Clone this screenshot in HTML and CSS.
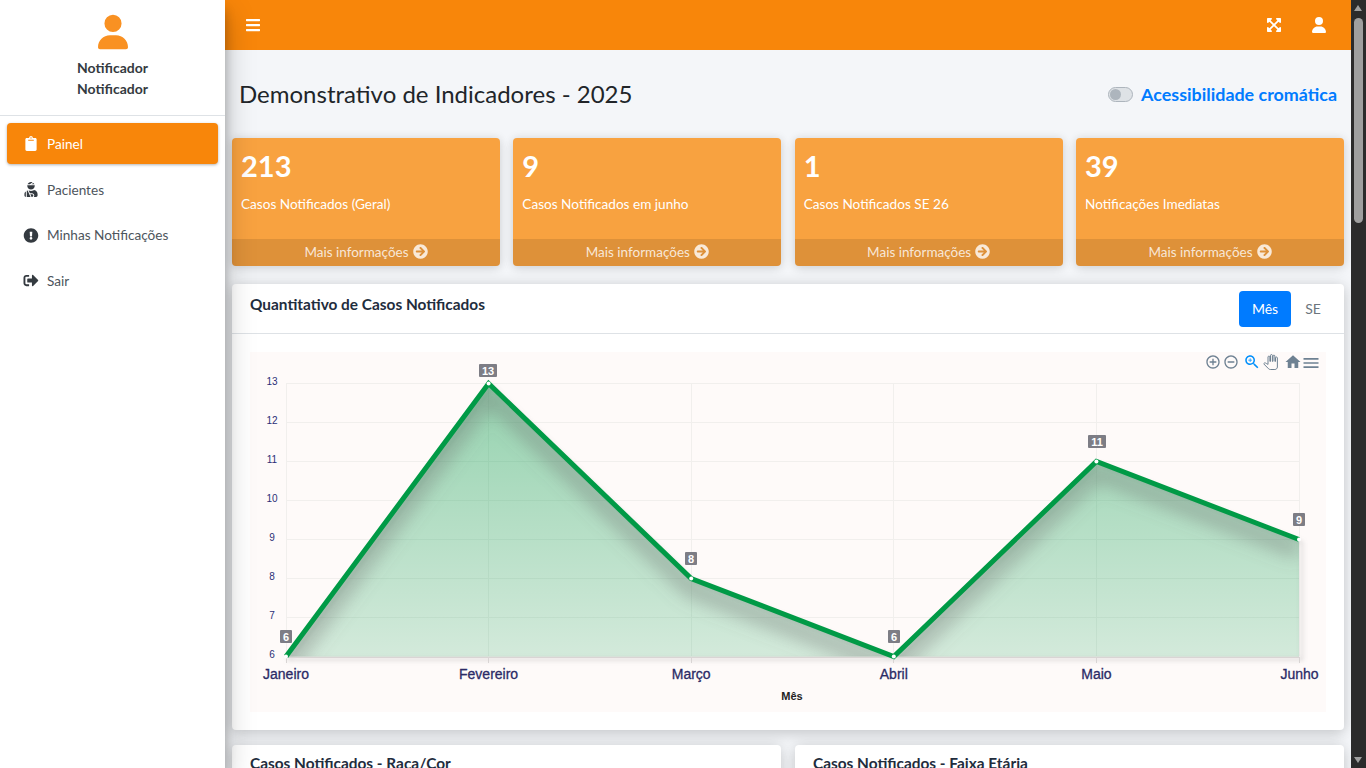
FILE: index.html
```html
<!DOCTYPE html>
<html lang="pt-BR">
<head>
  <meta charset="UTF-8">
  <title>Demonstrativo de Indicadores</title>
  <link rel="stylesheet" href="styles.css">
</head>
<body>

<svg class="defs" width="0" height="0">
  <symbol id="i-user" viewBox="0 0 448 512"><path d="M224 256A128 128 0 1 0 224 0a128 128 0 1 0 0 256zm-45.7 48C79.8 304 0 383.8 0 482.3C0 498.7 13.3 512 29.7 512H418.3c16.4 0 29.7-13.3 29.7-29.7C448 383.8 368.2 304 269.7 304H178.3z"/></symbol>
  <symbol id="i-arrow" viewBox="0 0 512 512"><path d="M256 8c137 0 248 111 248 248S393 504 256 504 8 393 8 256 119 8 256 8zm-28.9 143.6l75.5 72.4H120c-13.3 0-24 10.7-24 24v16c0 13.3 10.7 24 24 24h182.6l-75.5 72.4c-9.7 9.3-9.9 24.8-.4 34.3l11 10.9c9.4 9.4 24.6 9.4 33.9 0L404.3 273c9.4-9.4 9.4-24.6 0-33.9L271.6 106.3c-9.4-9.4-24.6-9.4-33.9 0l-11 10.9c-9.5 9.6-9.3 25.1.4 34.4z"/></symbol>
</svg>

<div class="app">

  <!-- SIDEBAR -->
  <aside class="sidebar">
    <div class="profile">
      <svg class="profile-icon"><use href="#i-user"/></svg>
      <div class="profile-name">Notificador</div>
      <div class="profile-name">Notificador</div>
    </div>
    <nav class="menu">
      <a class="menu-item active" href="#">
        <svg class="menu-icon" viewBox="0 0 384 512"><path d="M384 112v352c0 26.51-21.49 48-48 48H48c-26.51 0-48-21.49-48-48V112c0-26.51 21.49-48 48-48h80c0-35.29 28.71-64 64-64s64 28.71 64 64h80c26.51 0 48 21.49 48 48zM192 40c-13.255 0-24 10.745-24 24s10.745 24 24 24 24-10.745 24-24-10.745-24-24-24m96 114v-20a6 6 0 0 0-6-6H102a6 6 0 0 0-6 6v20a6 6 0 0 0 6 6h180a6 6 0 0 0 6-6z"/></svg>
        Painel
      </a>
      <a class="menu-item" href="#">
        <svg class="menu-icon" viewBox="0 0 448 512"><path d="M277.37 11.98C261.08 4.47 243.11 0 224 0c-53.69 0-99.5 33.13-118.51 80h81.19l90.69-68.02zM342.51 80c-7.9-19.47-20.67-36.2-36.49-49.52L239.99 80h102.52zM224 256c70.69 0 128-57.31 128-128 0-5.48-.95-10.7-1.61-16H97.61c-.67 5.3-1.61 10.52-1.61 16 0 70.69 57.31 128 128 128zM80 299.7V512h128.26l-98.45-221.52A132.835 132.835 0 0 0 80 299.7zM0 464c0 26.51 21.49 48 48 48V320.24C19.1 338.52 0 370.83 0 406.45V464zm256-48h-55.38l42.67 96H256c26.47 0 48-21.53 48-48s-21.53-48-48-48zm57.6-128h-16.71c-22.24 10.18-46.88 16-72.89 16s-50.65-5.82-72.89-16h-7.37l42.67 96H256c44.11 0 80 35.89 80 80 0 18.08-6.26 34.59-16.41 48H400c26.51 0 48-21.49 48-48v-57.6c0-74.23-60.17-134.4-134.4-134.4z"/></svg>
        Pacientes
      </a>
      <a class="menu-item" href="#">
        <svg class="menu-icon" viewBox="0 0 512 512"><path d="M504 256c0 136.997-111.043 248-248 248S8 392.997 8 256C8 119.083 119.043 8 256 8s248 111.083 248 248zm-248 50c-25.405 0-46 20.595-46 46s20.595 46 46 46 46-20.595 46-46-20.595-46-46-46zm-43.673-165.346l7.418 136c.347 6.364 5.609 11.346 11.982 11.346h48.546c6.373 0 11.635-4.982 11.982-11.346l7.418-136c.375-6.874-5.098-12.654-11.982-12.654h-63.383c-6.884 0-12.356 5.78-11.981 12.654z"/></svg>
        Minhas Notificações
      </a>
      <a class="menu-item" href="#">
        <svg class="menu-icon" viewBox="0 0 512 512"><path d="M497 273L329 441c-15 15-41 4.5-41-17v-96H152c-13.3 0-24-10.7-24-24v-96c0-13.3 10.7-24 24-24h136V88c0-21.4 25.9-32 41-17l168 168c9.3 9.4 9.3 24.6 0 34zM192 436v-40c0-6.6-5.4-12-12-12H96c-17.7 0-32-14.3-32-32V160c0-17.7 14.3-32 32-32h84c6.6 0 12-5.4 12-12V76c0-6.6-5.4-12-12-12H96c-53 0-96 43-96 96v192c0 53 43 96 96 96h84c6.6 0 12-5.4 12-12z"/></svg>
        Sair
      </a>
    </nav>
  </aside>

  <div class="main">

    <!-- TOP BAR -->
    <header class="topbar">
      <svg class="top-icon" viewBox="0 0 448 512"><path d="M16 132h416c8.837 0 16-7.163 16-16V76c0-8.837-7.163-16-16-16H16C7.163 60 0 67.163 0 76v40c0 8.837 7.163 16 16 16zm0 160h416c8.837 0 16-7.163 16-16v-40c0-8.837-7.163-16-16-16H16c-8.837 0-16 7.163-16 16v40c0 8.837 7.163 16 16 16zm0 160h416c8.837 0 16-7.163 16-16v-40c0-8.837-7.163-16-16-16H16c-8.837 0-16 7.163-16 16v40c0 8.837 7.163 16 16 16z"/></svg>
      <div class="top-right">
        <svg class="top-icon" viewBox="0 0 448 512"><path d="M448 344v112a23.94 23.94 0 0 1-24 24H312c-21.39 0-32.09-25.9-17-41l36.2-36.2L224 295.6 116.77 402.9 153 439c15.09 15.1 4.39 41-17 41H24a23.94 23.94 0 0 1-24-24V344c0-21.4 25.89-32.1 41-17l36.19 36.2L184.46 256 77.18 148.7 41 185c-15.1 15.1-41 4.4-41-17V56a23.94 23.94 0 0 1 24-24h112c21.39 0 32.09 25.9 17 41l-36.2 36.2L224 216.4l107.23-107.3L295 73c-15.09-15.1-4.39-41 17-41h112a23.94 23.94 0 0 1 24 24v112c0 21.4-25.89 32.1-41 17l-36.19-36.2L263.54 256l107.28 107.3L407 327.1c15.1-15.2 41-4.5 41 16.9z"/></svg>
        <svg class="top-icon"><use href="#i-user"/></svg>
      </div>
    </header>

    <div class="content">

      <div class="page-head">
        <h1>Demonstrativo de Indicadores - 2025</h1>
        <label class="access">
          <span class="switch"><span class="knob"></span></span>
          Acessibilidade cromática
        </label>
      </div>

      <!-- SMALL BOXES -->
      <div class="boxes">
        <div class="box">
          <div class="box-body"><strong>213</strong><p>Casos Notificados (Geral)</p></div>
          <a class="box-foot" href="#">Mais informações <svg class="foot-icon"><use href="#i-arrow"/></svg></a>
        </div>
        <div class="box">
          <div class="box-body"><strong>9</strong><p>Casos Notificados em junho</p></div>
          <a class="box-foot" href="#">Mais informações <svg class="foot-icon"><use href="#i-arrow"/></svg></a>
        </div>
        <div class="box">
          <div class="box-body"><strong>1</strong><p>Casos Notificados SE 26</p></div>
          <a class="box-foot" href="#">Mais informações <svg class="foot-icon"><use href="#i-arrow"/></svg></a>
        </div>
        <div class="box">
          <div class="box-body"><strong>39</strong><p>Notificações Imediatas</p></div>
          <a class="box-foot" href="#">Mais informações <svg class="foot-icon"><use href="#i-arrow"/></svg></a>
        </div>
      </div>

      <!-- LINE CHART -->
      <section class="card">
        <div class="card-head">
          <h2>Quantitativo de Casos Notificados</h2>
          <div class="tabs">
            <a class="tab active" href="#">Mês</a>
            <a class="tab" href="#">SE</a>
          </div>
        </div>
        <div class="card-body">
          <svg class="chart" width="1076" height="360" viewBox="0 0 1076 360">
            <defs>
              <linearGradient id="areaFill" x1="0" y1="31" x2="0" y2="304" gradientUnits="userSpaceOnUse">
                <stop offset="0" stop-color="#009a46" stop-opacity=".42"/>
                <stop offset="1" stop-color="#009a46" stop-opacity=".17"/>
              </linearGradient>
              <filter id="soft" x="-5%" y="-20%" width="110%" height="140%"><feGaussianBlur stdDeviation="9"/></filter>
              <filter id="faint" x="-5%" y="-20%" width="110%" height="140%"><feGaussianBlur stdDeviation="2"/></filter>
              <clipPath id="areaClip"><path d="M36 304.5L238.6 31.5L441.2 226.5L643.8 304.5L846.4 109.5L1049 187.5V304.5Z"/></clipPath>
            </defs>

            <g class="grid-lines">
              <path d="M36 31.5H1049M36 70.5H1049M36 109.5H1049M36 148.5H1049M36 187.5H1049M36 226.5H1049M36 265.5H1049M36 304.5H1049"/>
              <path d="M36.5 31V304M238.5 31V304M441.5 31V304M643.5 31V304M846.5 31V304M1049.5 31V304"/>
            </g>

            <path class="edge-shadow" filter="url(#faint)" d="M39 307.5L241.6 34.5L444.2 229.5L646.8 307.5L849.4 112.5L1052 190.5V307.5Z"/>
            <path fill="url(#areaFill)" d="M36 304.5L238.6 31.5L441.2 226.5L643.8 304.5L846.4 109.5L1049 187.5V304.5Z"/>
            <g clip-path="url(#areaClip)">
              <path class="area-shadow" filter="url(#soft)" d="M36 315L238.6 42L441.2 237L643.8 315L846.4 120L1049 198"/>
            </g>
            <path class="axis" d="M36 305.5H1049M36.5 305V311M238.5 305V311M441.5 305V311M643.5 305V311M846.5 305V311M1049.5 305V311"/>
            <path class="line" d="M36 304.5L238.6 31.5L441.2 226.5L643.8 304.5L846.4 109.5L1049 187.5"/>

            <g class="dots">
              <circle cx="36" cy="304.5" r="2"/><circle cx="238.6" cy="31.5" r="2"/><circle cx="441.2" cy="226.5" r="2"/>
              <circle cx="643.8" cy="304.5" r="2"/><circle cx="846.4" cy="109.5" r="2"/><circle cx="1049" cy="187.5" r="2"/>
            </g>

            <g class="tag">
              <rect x="30" y="278" width="12" height="13" rx="1"/><text x="36" y="288.5">6</text>
              <rect x="229" y="12" width="18" height="13" rx="1"/><text x="238" y="22.5">13</text>
              <rect x="435" y="200" width="12" height="13" rx="1"/><text x="441" y="210.5">8</text>
              <rect x="638" y="278" width="12" height="13" rx="1"/><text x="644" y="288.5">6</text>
              <rect x="838" y="83" width="18" height="13" rx="1"/><text x="847" y="93.5">11</text>
              <rect x="1043" y="161" width="12" height="13" rx="1"/><text x="1049" y="171.5">9</text>
            </g>

            <g class="y-label">
              <text x="22" y="33">13</text><text x="22" y="72">12</text><text x="22" y="111">11</text><text x="22" y="150">10</text>
              <text x="22" y="189">9</text><text x="22" y="228">8</text><text x="22" y="267">7</text><text x="22" y="306">6</text>
            </g>

            <g class="x-label">
              <text x="36" y="327">Janeiro</text><text x="238.6" y="327">Fevereiro</text><text x="441.2" y="327">Março</text>
              <text x="643.8" y="327">Abril</text><text x="846.4" y="327">Maio</text><text x="1049.5" y="327">Junho</text>
            </g>
            <text class="x-title" x="542" y="348">Mês</text>

            <!-- toolbar -->
            <g class="tool">
              <svg x="955" y="2" width="16" height="16" viewBox="0 0 24 24"><path d="M13 7h-2v4H7v2h4v4h2v-4h4v-2h-4V7zm-1-5C6.48 2 2 6.48 2 12s4.48 10 10 10 10-4.48 10-10S17.52 2 12 2zm0 18c-4.41 0-8-3.59-8-8s3.59-8 8-8 8 3.59 8 8-3.59 8-8 8z"/></svg>
              <svg x="973" y="2" width="16" height="16" viewBox="0 0 24 24"><path d="M7 11v2h10v-2H7zm5-9C6.48 2 2 6.48 2 12s4.48 10 10 10 10-4.48 10-10S17.52 2 12 2zm0 18c-4.41 0-8-3.59-8-8s3.59-8 8-8 8 3.59 8 8-3.59 8-8 8z"/></svg>
              <svg class="tool-on" x="993" y="1" width="18" height="18" viewBox="0 0 24 24"><path d="M15.5 14h-.79l-.28-.27C15.41 12.59 16 11.11 16 9.5 16 5.91 13.09 3 9.5 3S3 5.91 3 9.5 5.91 16 9.5 16c1.61 0 3.09-.59 4.23-1.57l.27.28v.79l5 4.99L20.49 19l-4.99-5zm-6 0C7.01 14 5 11.99 5 9.5S7.01 5 9.5 5 14 7.01 14 9.5 11.99 14 9.5 14z"/><path d="M12 10h-2v2H9v-2H7V9h2V7h1v2h2v1z"/></svg>
              <svg class="tool-pan" x="1013" y="2" width="15" height="16" viewBox="0 0 24 24"><path d="M23 5.5V20c0 2.2-1.8 4-4 4h-7.3c-1.08 0-2.1-.43-2.85-1.19L1 14.83s1.26-1.23 1.3-1.25c.22-.19.49-.29.79-.29.22 0 .42.06.6.16.04.01 4.31 2.46 4.31 2.46V4c0-.83.67-1.5 1.5-1.5S11 3.17 11 4v7h1V1.5c0-.83.67-1.5 1.5-1.5S15 .67 15 1.5V11h1V2.5c0-.83.67-1.5 1.5-1.5s1.5.67 1.5 1.5V11h1V5.5c0-.83.67-1.5 1.5-1.5s1.5.67 1.5 1.5z"/></svg>
              <svg x="1034" y="1" width="18" height="18" viewBox="0 0 24 24"><path d="M10 20v-6h4v6h5v-8h3L12 3 2 12h3v8z"/></svg>
              <svg x="1051" y="1" width="20" height="20" viewBox="0 0 24 24"><path d="M3 18h18v-2H3v2zm0-5h18v-2H3v2zm0-7v2h18V6H3z"/></svg>
            </g>
          </svg>
        </div>
      </section>

      <!-- LOWER CARDS -->
      <div class="lower">
        <section class="card"><div class="lower-head"><h2>Casos Notificados - Raça/Cor</h2></div></section>
        <section class="card"><div class="lower-head"><h2>Casos Notificados - Faixa Etária</h2></div></section>
      </div>

    </div>
  </div>

  <!-- SCROLLBAR -->
  <div class="scrollbar">
    <span class="arrow-up"></span>
    <span class="thumb"></span>
    <span class="arrow-down"></span>
  </div>

</div>
</body>
</html>
```

FILE: styles.css
```css
* {
  box-sizing: border-box;
}

html, body {
  margin: 0;
  height: 768px;
  overflow: hidden;
}

body {
  font-family: "Lato", "Noto Sans", sans-serif;
  font-size: 14px;
  color: #212529;
  background: #f4f6f9;
}

a {
  text-decoration: none;
}

.defs {
  position: absolute;
}

.app {
  display: flex;
  height: 768px;
}

/* Sidebar */
.sidebar {
  flex: 0 0 225px;
  background: #fff;
  box-shadow: 0 14px 28px rgba(0, 0, 0, .25), 0 10px 10px rgba(0, 0, 0, .22);
  position: relative;
  z-index: 2;
}

.profile {
  height: 116px;
  padding-top: 14px;
  border-bottom: 1px solid #dee2e6;
  text-align: center;
}

.profile-icon {
  display: block;
  width: 30px;
  height: 36px;
  margin: 0 auto 7px;
  fill: #f99122;
}

.profile-name {
  font-size: 14px;
  font-weight: 700;
  line-height: 21px;
  color: #343a40;
}

.menu {
  display: flex;
  flex-direction: column;
  padding: 7px 7px 0;
}

.menu-item {
  display: flex;
  align-items: center;
  gap: 8px;
  height: 41px;
  margin-bottom: 4.5px;
  padding-left: 16px;
  border-radius: 4px;
  font-size: 13.6px;
  color: #4d555c;
  fill: #343a40;
}

.menu-item.active {
  margin-bottom: 5.4px;
  background: #f8860a;
  color: #fff;
  fill: #fff;
  box-shadow: 0 1px 3px rgba(0, 0, 0, .3);
}

.menu-icon {
  width: 16px;
  height: 15px;
}

/* Top bar */
.main {
  flex: 1;
  min-width: 0;
  overflow: hidden;
}

.topbar {
  display: flex;
  justify-content: space-between;
  align-items: center;
  height: 50px;
  padding: 0 25px 0 21px;
  background: #f8860a;
}

.top-right {
  display: flex;
  gap: 31px;
}

.top-icon {
  width: 14px;
  height: 16px;
  fill: #fff;
}

/* Content */
.content {
  padding: 0 7px;
}

.page-head {
  display: flex;
  justify-content: space-between;
  align-items: center;
  height: 88px;
  padding: 0 7px;
}

.page-head h1 {
  margin: 0 0 2px;
  font-size: 24px;
  font-weight: 400;
  color: #212529;
}

.access {
  display: flex;
  align-items: center;
  gap: 8px;
  font-size: 17.9px;
  font-weight: 700;
  color: #007bff;
}

.switch {
  width: 25px;
  height: 15px;
  padding: 1px;
  border: 1px solid #adb5bd;
  border-radius: 8px;
  background: #dee2e6;
}

.knob {
  display: block;
  width: 11px;
  height: 11px;
  border-radius: 50%;
  background: #adb5bd;
}

.boxes {
  display: grid;
  grid-template-columns: repeat(4, 1fr);
  gap: 13.33px;
}

.box {
  height: 128px;
  display: flex;
  flex-direction: column;
  border-radius: 4px;
  background: #f8a240;
  color: #fff;
  box-shadow: 0 0 10px rgba(0, 0, 0, .1), 0 4px 12px rgba(0, 0, 0, .08);
}

.box-body {
  flex: 1;
  padding: 9px 9px;
}

.box-body strong {
  display: block;
  font-size: 29px;
  line-height: 37px;
}

.box-body p {
  margin: 10px 0 0;
  font-size: 13.6px;
  line-height: 20px;
}

.box-foot {
  display: flex;
  justify-content: center;
  align-items: center;
  gap: 4px;
  height: 27px;
  padding-bottom: 2px;
  border-radius: 0 0 4px 4px;
  background: rgba(0, 0, 0, .1);
  font-size: 13.5px;
  color: rgba(255, 255, 255, .8);
  fill: rgba(255, 255, 255, .8);
}

.foot-icon {
  width: 15px;
  height: 15px;
}

/* Cards */
.card {
  border-radius: 4px;
  background: #fff;
  box-shadow: 0 0 14px rgba(0, 0, 0, .12), 0 6px 14px rgba(0, 0, 0, .1);
}

.boxes + .card {
  margin-top: 18px;
  height: 446px;
}

.card h2 {
  margin: 0;
  font-size: 15.4px;
  font-weight: 700;
  color: #1f2d3d;
}

.card-head {
  display: flex;
  justify-content: space-between;
  height: 50px;
  padding: 7px 9px 0 18px;
  border-bottom: 1px solid #dee2e6;
}

.card-head h2 {
  padding-top: 4px;
}

.tabs {
  display: flex;
}

.tab {
  display: flex;
  justify-content: center;
  align-items: center;
  width: 44px;
  height: 36px;
  padding-bottom: 1px;
  border-radius: 4px;
  font-size: 14px;
  color: #6c757d;
}

.tab.active {
  width: 52px;
  background: #007bff;
  color: #fff;
}

.card-body {
  padding: 18px 18px 0;
}

.chart {
  display: block;
  background: #fefaf9;
}

.grid-lines path {
  fill: none;
  stroke: #f1efed;
}

.edge-shadow {
  fill: none;
  stroke: #888;
  stroke-width: 3;
  stroke-opacity: .25;
}

.area-shadow {
  fill: none;
  stroke: #6b6b6b;
  stroke-width: 16;
  stroke-opacity: .42;
}

.axis {
  fill: none;
  stroke: #d9d5d4;
}

.line {
  fill: none;
  stroke: #009a46;
  stroke-width: 5;
}

.dots circle {
  fill: #fff;
}

.tag rect {
  fill: #7d7d85;
}

.tag text {
  font: 700 11px "Liberation Sans", sans-serif;
  text-anchor: middle;
  fill: #fff;
}

.y-label text {
  font: 10px "Liberation Sans", sans-serif;
  text-anchor: middle;
  fill: #2b2f77;
}

.x-label text {
  font: 14px "Liberation Sans", sans-serif;
  text-anchor: middle;
  fill: #2b2b66;
  stroke: #2b2b66;
  stroke-width: .3;
}

.x-title {
  font: 700 11px "Liberation Sans", sans-serif;
  text-anchor: middle;
  fill: #222;
}

.tool svg {
  fill: #6e8192;
}

.tool .tool-on {
  fill: #008ffb;
}

.tool .tool-pan {
  fill: none;
  stroke: #6e8192;
  stroke-width: 1.6;
}

.lower {
  display: grid;
  grid-template-columns: 1fr 1fr;
  gap: 14px;
  margin-top: 15px;
}

.lower .card {
  height: 200px;
}

.lower-head {
  padding: 9px 18px;
}

/* Scrollbar drawn by hand, the page itself does not scroll */
.scrollbar {
  flex: 0 0 15px;
  position: relative;
  background: #2b2b2b;
}

.thumb {
  position: absolute;
  top: 18px;
  left: 3px;
  width: 9px;
  height: 205px;
  border-radius: 5px;
  background: #9f9f9f;
}

.arrow-up, .arrow-down {
  position: absolute;
  left: 3px;
  border-left: 4.5px solid transparent;
  border-right: 4.5px solid transparent;
}

.arrow-up {
  top: 5px;
  border-bottom: 6px solid #9f9f9f;
}

.arrow-down {
  bottom: 5px;
  border-top: 6px solid #9f9f9f;
}
```
